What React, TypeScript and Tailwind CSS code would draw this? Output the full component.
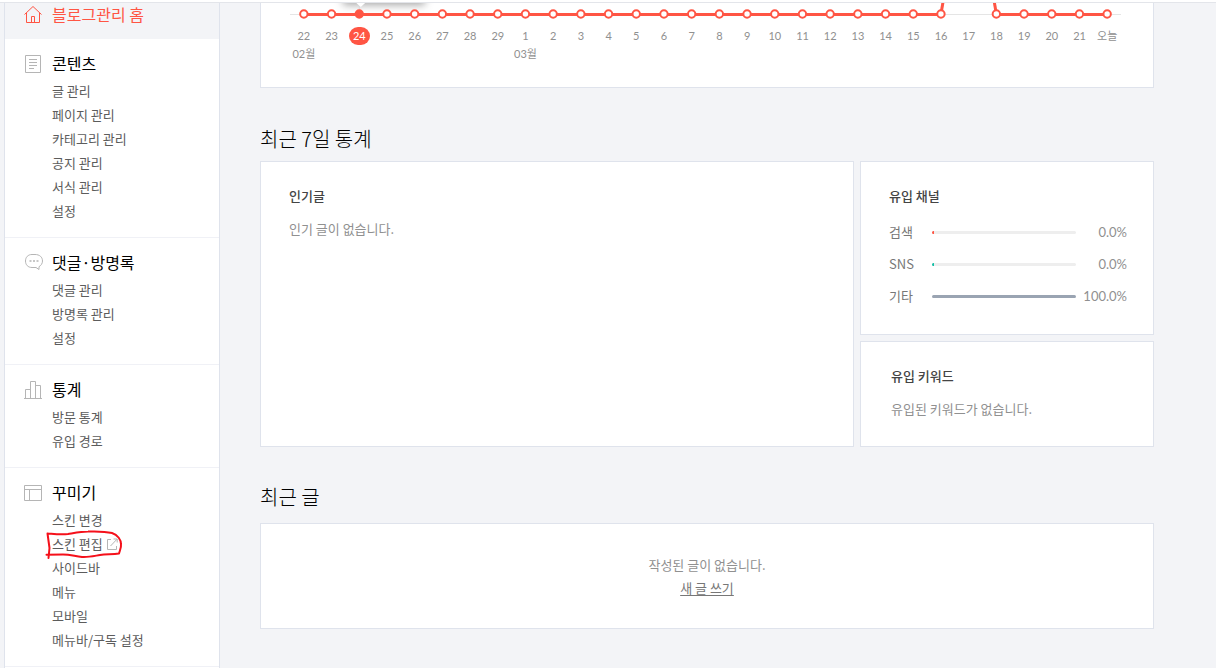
import type { ReactNode } from 'react';
import clsx from 'clsx';

interface MenuItem {
  label: string;
  external?: boolean;
}

interface MenuSection {
  title: string;
  icon: ReactNode;
  items: MenuItem[];
}

function Icon({ children }: { children: ReactNode }) {
  return (
    <svg width="18" height="20" viewBox="0 0 18 20" fill="none" stroke="currentColor" className="shrink-0 overflow-visible" aria-hidden="true">
      {children}
    </svg>
  );
}

const homeIcon = (
  <Icon>
    <path d="M0.5 10.5 L9 2.5 L17.5 10.5 M2.5 9 V18.5 H15.5 V9 M7.5 18.5 V12.5 H10.5 V18.5" />
  </Icon>
);

const sections: MenuSection[] = [
  {
    title: '콘텐츠',
    icon: (
      <Icon>
        <path d="M1.5 2.5 H16.5 V19.5 H1.5 Z M5 6.5 H13 M5 9.5 H13 M5 12.5 H13 M5 15.5 H10" />
      </Icon>
    ),
    items: [
      { label: '글 관리' },
      { label: '페이지 관리' },
      { label: '카테고리 관리' },
      { label: '공지 관리' },
      { label: '서식 관리' },
      { label: '설정' },
    ],
  },
  {
    title: '댓글·방명록',
    icon: (
      <Icon>
        <path d="M8 2.5 H11 C15.5 2.5 18.5 5 18.5 9 C18.5 11.5 17 13.5 15 14.7 V17.5 L12 15.5 H8 C4 15.5 1.5 12.8 1.5 9 C1.5 5.2 4 2.5 8 2.5 Z" />
        <path d="M5.5 9 H7.5 M9 9 H11 M12.5 9 H14.5" strokeWidth="1.5" />
      </Icon>
    ),
    items: [{ label: '댓글 관리' }, { label: '방명록 관리' }, { label: '설정' }],
  },
  {
    title: '통계',
    icon: (
      <Icon>
        <path d="M0 19.5 H18 M1.5 19.5 V10.5 H6.5 M6.5 19.5 V2.5 H11.5 V19.5 M11.5 6.5 H16.5 V19.5" />
      </Icon>
    ),
    items: [{ label: '방문 통계' }, { label: '유입 경로' }],
  },
  {
    title: '꾸미기',
    icon: (
      <Icon>
        <path d="M0.5 3.5 H17.5 V18.5 H0.5 Z M0.5 7.5 H17.5 M5.5 7.5 V18.5" />
      </Icon>
    ),
    items: [
      { label: '스킨 변경' },
      { label: '스킨 편집', external: true },
      { label: '사이드바' },
      { label: '메뉴' },
      { label: '모바일' },
      { label: '메뉴바/구독 설정' },
    ],
  },
];

const days = [
  '22', '23', '24', '25', '26', '27', '28', '29',
  '1', '2', '3', '4', '5', '6', '7', '8', '9', '10', '11', '12', '13',
  '14', '15', '16', '17', '18', '19', '20', '21', '오늘',
];
const months: Record<number, string> = { 0: '02월', 8: '03월' };
const selectedDay = 2;
const peakDay = 24;

const channels = [
  { name: '검색', value: '0.0%', bar: 'w-[2px] bg-[#ff5544]' },
  { name: 'SNS', value: '0.0%', bar: 'w-[2px] bg-[#13bfa6]' },
  { name: '기타', value: '100.0%', bar: 'w-full bg-[#9aa4b2]' },
];

// centre of a day's column, as a share of the chart's width
const dayX = (i: number) => `${((i + 0.5) / days.length) * 100}%`;

function ExternalIcon() {
  return (
    <svg width="12" height="12" viewBox="0 0 12 12" fill="none" stroke="#b5b5b5" className="ml-[3px]" aria-hidden="true">
      <path d="M5 1.5 H1.5 V11.5 H10.5 V8 M4.5 8 L11 1.2 M7.5 1 H11.2 V4.5" />
    </svg>
  );
}

function HandMark() {
  return (
    <svg width="80" height="32" viewBox="0 0 80 32" fill="none" stroke="#f5101a" strokeWidth="2" strokeLinecap="round" strokeLinejoin="round" className="pointer-events-none absolute -left-2 -top-[3px]" aria-hidden="true">
      <path d="M4.5 29 L5.5 19 L3.5 4.5 C10 5 17 6 24 5 C33 3.5 38 2.5 44 2.5 C53 2.2 62 2.5 68 4 C74 6 77 11 77 15 C77.5 18 76 21 75 24.5 C68 25.5 62 25 56 26 C50 27 44 28.5 38 28 C30 27 26 25.5 19 25.5 L2.5 25.8" />
    </svg>
  );
}

function Sidebar() {
  return (
    <aside className="ml-1 w-[216px] shrink-0 border-x border-[#dfe3ec] bg-white">
      <a href="#home" className="flex items-center gap-2.5 bg-[#f3f4f7] pb-3.5 pl-[19px] text-base leading-[22px] text-[#ff5544]">
        {homeIcon}
        블로그관리 홈
      </a>
      <nav>
        {sections.map((section) => (
          <section key={section.title} className="border-b border-[#f0f1f6] pb-3.5 pt-3">
            <h2 className="mb-1 flex items-center gap-2.5 pl-[19px] text-base leading-6 text-black">
              <span className="text-[#b5b5b5]">{section.icon}</span>
              {section.title}
            </h2>
            <ul className="pl-[47px]">
              {section.items.map((item) => (
                <li key={item.label} className="h-6">
                  <a href="#menu" className="relative inline-flex h-6 items-center align-top text-[13px] leading-6 text-[#5c5c5c]">
                    {item.label}
                    {item.external && <ExternalIcon />}
                    {item.external && <HandMark />}
                  </a>
                </li>
              ))}
            </ul>
          </section>
        ))}
      </nav>
    </aside>
  );
}

function VisitChart() {
  return (
    <section className="relative overflow-hidden border border-t-0 border-[#dfe3ec] bg-white pb-6 pl-[29px] pr-8">
      {/* bottom edge of the selected day's tooltip */}
      <div className="absolute -top-10 left-[82px] h-10 w-[82px] bg-white shadow-[0_2px_8px_rgba(0,0,0,0.35)]" />
      <div className="relative">
        <svg width="100%" height="24" className="block overflow-visible" aria-hidden="true">
          <line x1="0" x2="100%" y1="11.5" y2="11.5" stroke="#e5e5e5" />
          <line x1={dayX(selectedDay)} x2={dayX(selectedDay)} y1="0" y2="11" stroke="#d5d8de" />
          <svg x={dayX(selectedDay)} className="overflow-visible">
            <path d="M-4 -1 H7 L1.5 4 Z" fill="#fff" />
          </svg>
          <g stroke="#ff5544" strokeWidth="3">
            <line x1={dayX(0)} x2={dayX(peakDay - 1)} y1="11.5" y2="11.5" />
            <line x1={dayX(peakDay - 1)} x2={dayX(peakDay)} y1="11" y2="-150" />
            <line x1={dayX(peakDay)} x2={dayX(peakDay + 1)} y1="-150" y2="11" />
            <line x1={dayX(peakDay + 1)} x2={dayX(days.length - 1)} y1="11.5" y2="11.5" />
          </g>
          {days.map((day, i) =>
            i === peakDay ? null : (
              <circle key={day} cx={dayX(i)} cy="11" r="3.7" fill={i === selectedDay ? '#ff5544' : '#fff'} stroke="#ff5544" strokeWidth="2" />
            )
          )}
        </svg>
        <ol className="flex h-9 text-[11px] leading-[18px] text-[#909090]">
          {days.map((day, i) => (
            <li key={day} className="flex w-0 flex-1 flex-col items-center whitespace-nowrap font-['Lato','Noto_Sans_CJK_KR',sans-serif]">
              <span className={clsx(i === selectedDay && 'rounded-full bg-[#ff5544] px-1 text-white')}>{day}</span>
              {months[i] && <span>{months[i]}</span>}
            </li>
          ))}
        </ol>
      </div>
    </section>
  );
}

function Card({ title, className, children }: { title: string; className?: string; children: ReactNode }) {
  return (
    <section className={clsx('border border-[#dfe3ec] bg-white pt-6 text-[13px] leading-5', className)}>
      <h3 className="font-medium text-[#444]">{title}</h3>
      {children}
    </section>
  );
}

export default function App() {
  return (
    <div className="flex min-h-screen flex-col bg-[#f3f4f7] font-['Noto_Sans_CJK_KR',sans-serif]">
      <div className="h-[3px] border-b border-[#e3e5ea] bg-white" />
      <div className="flex flex-1">
        <Sidebar />
        <main className="ml-10 mr-[62px] min-w-0 flex-1 pb-9">
          <VisitChart />

          <h2 className="mb-2 mt-9 text-xl font-light leading-[29px] text-black">최근 7일 통계</h2>
          <div className="flex gap-1.5">
            <Card title="인기글" className="flex-1 px-7">
              <p className="mt-[13px] text-[#909090]">인기 글이 없습니다.</p>
            </Card>
            <div className="flex w-[294px] flex-col gap-1.5">
              <Card title="유입 채널" className="pb-[22px] pl-7 pr-[26px]">
                <dl className="mt-2.5 text-[#777]">
                  {channels.map((channel) => (
                    <div key={channel.name} className="flex h-8 items-center">
                      <dt className="w-[43px]">{channel.name}</dt>
                      <dd className="flex flex-1 items-center justify-between">
                        <span className="h-[3px] w-36 overflow-hidden rounded-full bg-[#eee]">
                          <span className={clsx('block h-full', channel.bar)} />
                        </span>
                        <span className="font-['Lato',sans-serif] text-[#909090]">{channel.value}</span>
                      </dd>
                    </div>
                  ))}
                </dl>
              </Card>
              <Card title="유입 키워드" className="px-[30px] pb-[27px]">
                <p className="mt-[13px] text-[#909090]">유입된 키워드가 없습니다.</p>
              </Card>
            </div>
          </div>

          <h2 className="mb-3 mt-[35px] text-xl font-light leading-[29px] text-black">최근 글</h2>
          <section className="border border-[#dfe3ec] bg-white pb-[29px] pt-[29px] text-center text-[13px] leading-[23px] text-[#909090]">
            <p>작성된 글이 없습니다.</p>
            <a href="#write" className="text-[#777] underline underline-offset-2">새 글 쓰기</a>
          </section>
        </main>
      </div>
    </div>
  );
}
